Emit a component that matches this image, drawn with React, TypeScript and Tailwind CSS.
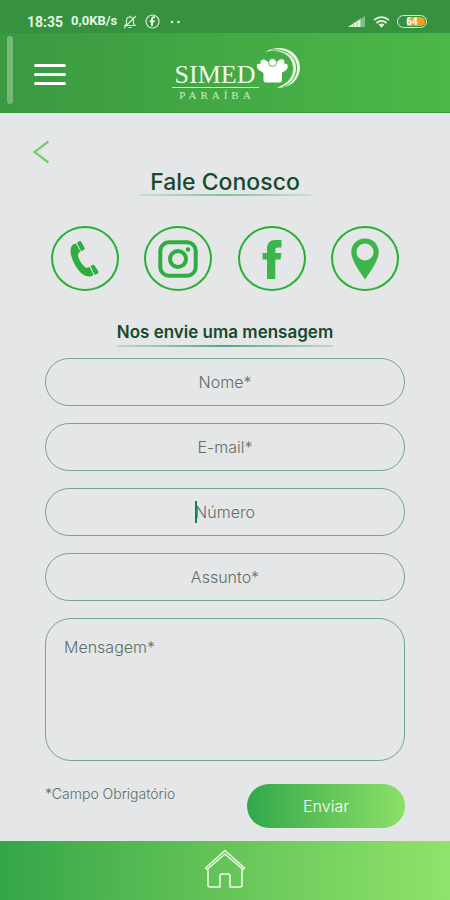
import { useState } from "react";

const fields = [
  { id: "nome", label: "Nome*", type: "text" },
  { id: "email", label: "E-mail*", type: "email" },
  { id: "numero", label: "Número", type: "tel" },
  { id: "assunto", label: "Assunto*", type: "text" },
];

function PhoneIcon() {
  return (
    <svg width="32" height="40" viewBox="0 0 32 40" fill="#2fae3f">
      <path d="M3.500 6C5 5 6 4.700 7 4.500L11.500 12.500C9.800 13.500 9 14.500 9 16.500C9.800 21 13.500 26.500 17 28.700C18.500 29.200 19.500 28.300 20.500 27.700L24.500 36C21.500 38.300 17.500 37.800 14 35.500C8 31 3.500 22.500 1.800 15C1.200 11.500 1.500 8 3.500 6Z" />
      <path d="M7.900 3.800L10.300 2.200C11.100 1.800 11.800 2 12.300 2.800L15.500 8.800C15.900 9.600 15.700 10.200 15 10.700L12.300 12.300Z" />
      <path d="M21.500 27.100L23.500 26C24.300 25.600 25 25.900 25.500 26.600L29.300 32.300C29.700 33.100 29.500 33.800 28.800 34.200L25.600 35.900Z" />
    </svg>
  );
}

function InstagramIcon() {
  return (
    <svg width="40" height="38" viewBox="0 0 40 38" fill="none" stroke="#2fae3f" strokeWidth="4">
      <rect x="2.300" y="2.300" width="35.400" height="33.400" rx="8.500" />
      <circle cx="20" cy="19" r="8" />
      <circle cx="30" cy="9.500" r="2.300" fill="#2fae3f" stroke="none" />
    </svg>
  );
}

function FacebookIcon() {
  return (
    <svg width="20" height="40" viewBox="0 0 20 40" fill="#3cb54a">
      <path d="M19.500 1V8.500H15.500C14 8.500 13.300 9.300 13.300 11V14H19.300L18.600 20.500H13.300V40H5V20.500H0.500V14H5V10C5 4 8 1 13.500 1Z" />
    </svg>
  );
}

function PinIcon() {
  return (
    <svg width="28" height="42" viewBox="0 0 28 42" fill="#3cb54a">
      <path
        fillRule="evenodd"
        d="M14 0.500C6.300 0.500 0.300 6.300 0.300 14C0.300 22 7 31 14 41.500C21 31 27.700 22 27.700 14C27.700 6.300 21.700 0.500 14 0.500ZM14 5.500A8.500 8.500 0 1 1 14 22.500A8.500 8.500 0 1 1 14 5.500Z"
      />
    </svg>
  );
}

const contacts = [
  { name: "Telefone", icon: <PhoneIcon /> },
  { name: "Instagram", icon: <InstagramIcon /> },
  { name: "Facebook", icon: <FacebookIcon /> },
  { name: "Localização", icon: <PinIcon /> },
];

function StatusBar() {
  return (
    <div className="flex h-[33px] items-center bg-[#36923f] pt-[10px] pr-[23px] pl-[27px] font-['Roboto',sans-serif] text-sm font-bold text-[#e4f5e4]">
      <span>18:35</span>
      <span className="ml-2 text-[13px]">0,0KB/s</span>
      {/* sino silenciado */}
      <svg className="ml-[6px]" width="14" height="14" viewBox="0 0 14 14" fill="none" stroke="#d5efd5" strokeWidth="1.200">
        <path d="M2 10.500H12L10.500 8.500V5.500A3.500 3.500 0 0 0 3.500 5.500V8.500ZM5.500 12.500H8.500M13 1L1 13M7 2V0.800" />
      </svg>
      <svg className="ml-2" width="15" height="15" viewBox="0 0 15 15">
        <circle cx="7.500" cy="7.500" r="6.500" fill="none" stroke="#d5efd5" strokeWidth="1.200" />
        <path d="M10 3.200H9C7.600 3.200 7 4 7 5.200V12M4.800 7.200H9.700" fill="none" stroke="#e8f8e8" strokeWidth="1.900" />
      </svg>
      <svg className="ml-[10px]" width="12" height="4" viewBox="0 0 12 4" fill="#e4f5e4">
        <circle cx="2" cy="2" r="1.300" />
        <circle cx="8.500" cy="2" r="1.300" />
      </svg>
      {/* sinal, wi-fi e bateria */}
      <svg className="ml-auto" width="17" height="11" viewBox="0 0 17 11">
        <path d="M0 11L17 0V11Z" fill="#7fbd85" />
        <path d="M0 11L12.500 3V11Z" fill="#dff3df" />
        <path d="M5.500 6V11M9 4V11M12.800 2V11" stroke="#8cc491" strokeWidth="0.700" />
      </svg>
      <svg className="ml-2" width="17" height="12" viewBox="0 0 17 12" fill="none" stroke="#dff3df" strokeWidth="1.800">
        <path d="M1 4.200C5.500 0.200 11.500 0.200 16 4.200M3.500 7C6.500 4.300 10.500 4.300 13.500 7" />
        <path d="M5.500 8.500C7.500 7 9.500 7 11.500 8.500L8.500 11.800Z" fill="#dff3df" stroke="none" />
      </svg>
      <span className="ml-[7px] flex h-[13px] w-[30px] rounded-full border border-[#d9f0d9] p-px">
        <span className="flex flex-1 items-center justify-center rounded-full bg-linear-to-r from-transparent from-30% to-[#f0a020] to-30% text-[10px] leading-none text-white">
          64
        </span>
      </span>
    </div>
  );
}

function Logo() {
  return (
    <div className="flex text-[#eefbe9]">
      <div className="flex w-[87px] flex-col items-center font-['Liberation_Serif',serif]">
        <span className="text-[26px] leading-6">SIMED</span>
        <span className="w-full border-t border-[#c9efc2] pt-px pl-1 text-center text-[11px] leading-3 tracking-[4px] text-[#c9efc2]">
          PARAÍBA
        </span>
      </div>
      <svg className="-mt-4 -ml-1" width="46" height="42" viewBox="0 0 46 42">
        <path d="M10 5C25 -4 44 3 45 20C45 34 33 42 22 40.500C33 37 39 30 38 20C37 8 25 1 10 5Z" fill="#e6f8e0" />
        <path d="M16 3C30 1.500 41 9 41.500 20C42 30 36 37 28 40" fill="none" stroke="#44aa45" strokeWidth="1" />
        <path d="M22 4C31 5 38 11 38.500 20C39 29 34 35 28 38" fill="none" stroke="#bfe8b8" strokeWidth="0.700" />
        <path
          d="M2 20C1 17 3 16 6 17C4 13 9 11 11 13.500L13 15H22L24 13C27 11 31 13 29 17C32 16 33.500 18 32.500 21C31 25 27 24 27 27V33Q27 35.500 24.500 35.500H11Q8.500 35.500 8.500 33V27C8.500 24 3 25 2 20Z"
          fill="#fff"
        />
        <circle cx="17.500" cy="15.500" r="4" fill="#fff" stroke="#44aa45" strokeWidth="0.900" />
      </svg>
    </div>
  );
}

export default function App() {
  const [values, setValues] = useState<Record<string, string>>({});

  const update = (id: string, value: string) => {
    setValues({ ...values, [id]: value });
  };

  return (
    <div className="flex min-h-screen flex-col bg-[#e4e6e8] font-['Inter',sans-serif]">
      <StatusBar />

      <header className="relative flex h-20 items-center border-b border-[#2f9e35] bg-linear-to-r from-[#3b9941] via-[#43a944] to-[#4cb848]">
        <div className="absolute top-[3px] left-[7px] h-[68px] w-[6px] rounded-full bg-white/30" />
        <button aria-label="Menu" className="ml-[34px] flex w-8 flex-col gap-[6px] pt-1">
          <span className="h-[3px] rounded-full bg-white" />
          <span className="h-[3px] rounded-full bg-white" />
          <span className="h-[3px] rounded-full bg-white" />
        </button>
        <div className="flex flex-1 justify-center pt-[18px] pr-[44px]">
          <Logo />
        </div>
      </header>

      <main className="flex-1 px-[45px] pt-[27px] pb-[13px]">
        <a href="#voltar" aria-label="Voltar" className="-ml-3 block w-4">
          <svg width="16" height="24" viewBox="0 0 16 24" fill="none" stroke="#74cf68" strokeWidth="2.300">
            <path d="M15.500 1.500L1.500 12L15.500 22.500" />
          </svg>
        </a>

        <h1 className="mt-[6px] text-center text-[23px] leading-6 font-medium text-[#174a2a]">Fale Conosco</h1>
        <div className="mx-auto h-0.5 w-[172px] bg-linear-to-r from-[#cfdcd8] via-[#7cc49a] to-[#cfdcd8]" />

        <div className="mt-[30px] flex justify-between px-[6px]">
          {contacts.map((c) => (
            <a
              key={c.name}
              href="#contato"
              aria-label={c.name}
              className="flex h-[65px] w-[68px] items-center justify-center rounded-[50%] border-2 border-[#28b032]"
            >
              {c.icon}
            </a>
          ))}
        </div>

        <h2 className="mt-7 text-center text-[17px] leading-[26px] font-semibold text-[#174a2a]">Nos envie uma mensagem</h2>
        <div className="mx-auto h-0.5 w-[216px] bg-linear-to-r from-[#c3d6cf] via-[#4fa97a] to-[#c3d6cf]" />

        <form className="mt-[11px]" onSubmit={(e) => e.preventDefault()}>
          <div className="flex flex-col gap-[17px]">
            {fields.map((f) => (
              <div key={f.id} className="relative">
                <input
                  id={f.id}
                  type={f.type}
                  aria-label={f.label}
                  placeholder={f.label}
                  value={values[f.id] || ""}
                  onChange={(e) => update(f.id, e.target.value)}
                  className="block h-12 w-full rounded-full border border-[#74a889] text-center text-base font-light text-[#4d5f55] outline-none placeholder:text-[#5f6f66]"
                />
                {/* cursor do campo ativo */}
                {f.id === "numero" && !values.numero && (
                  <span className="absolute top-[13px] left-1/2 -ml-[30px] h-[22px] w-0.5 bg-[#108060]" />
                )}
              </div>
            ))}
            <textarea
              aria-label="Mensagem*"
              placeholder="Mensagem*"
              value={values.mensagem || ""}
              onChange={(e) => update("mensagem", e.target.value)}
              className="block h-[143px] w-full resize-none rounded-[26px] border border-[#74a889] px-[18px] py-4 text-base font-light text-[#4d5f55] outline-none placeholder:text-[#5f6f66]"
            />
          </div>

          <div className="mt-[23px] flex items-start justify-between">
            <p className="text-sm leading-5 font-light text-[#5f6f66]">*Campo Obrigatório</p>
            <button
              type="submit"
              className="h-11 w-[158px] rounded-full bg-linear-to-r from-[#2fa84a] to-[#8be068] text-base font-light text-white"
            >
              Enviar
            </button>
          </div>
        </form>
      </main>

      <footer className="flex h-[59px] items-center justify-center bg-linear-to-r from-[#33a648] to-[#90e36a]">
        <a href="#inicio" aria-label="Início" className="-mt-1">
          <svg width="42" height="40" viewBox="0 0 42 40" fill="none" stroke="#effbe9" strokeWidth="1.500" strokeLinejoin="round" strokeLinecap="round">
            <path d="M1.500 19L21 1.500L40.500 19L39 20.500L21 5L3 20.500Z" />
            <path d="M4 20V36Q4 38 6 38H16V27Q16 25 18 25H24Q26 25 26 27V38H36Q38 38 38 36V20" />
          </svg>
        </a>
      </footer>
    </div>
  );
}
